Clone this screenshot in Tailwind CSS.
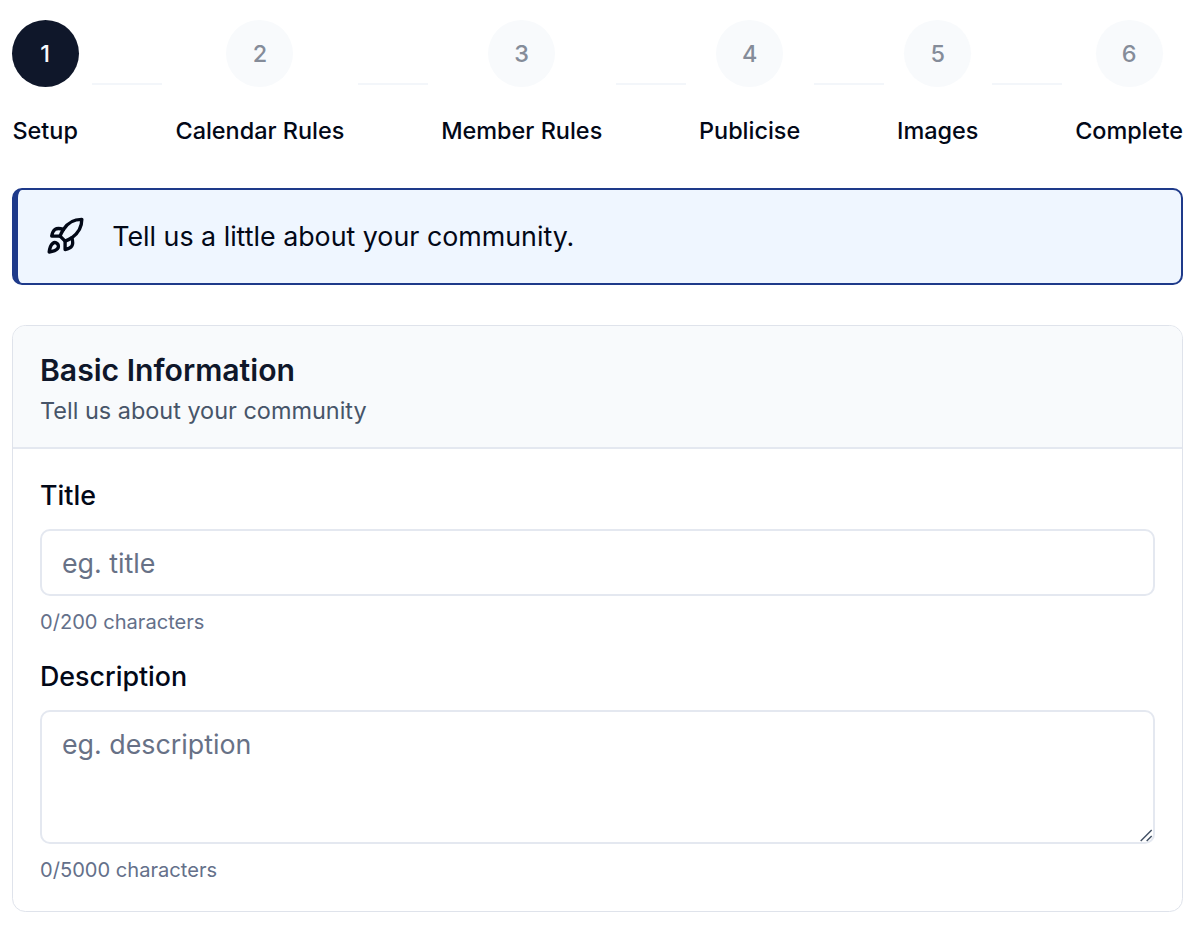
<!DOCTYPE html>
<html lang="en">
<head>
<meta charset="utf-8">
<title>Community setup</title>
<script src="https://cdn.jsdelivr.net/npm/@tailwindcss/browser@4"></script>
</head>
<body class="bg-white font-['Inter',sans-serif] text-[#020817] antialiased">
<main class="pl-[12px] pr-[17px] pt-[20.4px]">
  <nav class="-ml-[0.3px] flex h-[128px] gap-[13.4px] text-[23.45px] font-medium leading-[33.5px]">
    <div class="flex flex-col items-center gap-[26.8px]"><span class="flex size-[67px] shrink-0 items-center justify-center rounded-full bg-[#0f172a] text-[#f8fafc]">1</span><span class="whitespace-nowrap">Setup</span></div>
    <div class="mt-[62.6px] h-[2px] flex-1 bg-[#f3f6fa]"></div>
    <div class="flex flex-col items-center gap-[26.8px]"><span class="flex size-[67px] shrink-0 items-center justify-center rounded-full bg-[#f8fafc] text-[#858c99]">2</span><span class="whitespace-nowrap">Calendar Rules</span></div>
    <div class="mt-[62.6px] h-[2px] flex-1 bg-[#f3f6fa]"></div>
    <div class="flex flex-col items-center gap-[26.8px]"><span class="flex size-[67px] shrink-0 items-center justify-center rounded-full bg-[#f8fafc] text-[#858c99]">3</span><span class="whitespace-nowrap">Member Rules</span></div>
    <div class="mt-[62.6px] h-[2px] flex-1 bg-[#f3f6fa]"></div>
    <div class="flex flex-col items-center gap-[26.8px]"><span class="flex size-[67px] shrink-0 items-center justify-center rounded-full bg-[#f8fafc] text-[#858c99]">4</span><span class="whitespace-nowrap">Publicise</span></div>
    <div class="mt-[62.6px] h-[2px] flex-1 bg-[#f3f6fa]"></div>
    <div class="flex flex-col items-center gap-[26.8px]"><span class="flex size-[67px] shrink-0 items-center justify-center rounded-full bg-[#f8fafc] text-[#858c99]">5</span><span class="whitespace-nowrap">Images</span></div>
    <div class="mt-[62.6px] h-[2px] flex-1 bg-[#f3f6fa]"></div>
    <div class="flex flex-col items-center gap-[26.8px]"><span class="flex size-[67px] shrink-0 items-center justify-center rounded-full bg-[#f8fafc] text-[#858c99]">6</span><span class="whitespace-nowrap">Complete</span></div>
  </nav>

  <div class="mt-[39.6px] flex h-[97px] items-center rounded-[10px] border-2 border-l-[6px] border-[#1e3a8a] bg-[#eff6ff] pl-[27px]">
    <svg class="size-[40.2px]" viewBox="0 0 24 24" fill="none" stroke="currentColor" stroke-width="2" stroke-linecap="round" stroke-linejoin="round"><path d="M4.5 16.5c-1.5 1.26-2 5-2 5s3.74-.5 5-2c.71-.84.7-2.13-.09-2.91a2.18 2.18 0 0 0-2.91-.09z"/><path d="m12 15-3-3a22 22 0 0 1 2-3.95A12.88 12.88 0 0 1 22 2c0 2.72-.78 7.5-6 11a22.35 22.35 0 0 1-4 2z"/><path d="M9 12H4s.55-3.03 2-4c1.62-1.08 5 0 5 0"/><path d="M12 15v5s3.03-.55 4-2c1.08-1.62 0-5 0-5"/></svg>
    <p class="mb-px ml-[27px] text-[26.8px] leading-[40px]">Tell us a little about your community.</p>
  </div>

  <section class="mt-[40px] h-[587px] overflow-hidden rounded-[13.4px] border border-[#dfe3eb]">
    <header class="h-[123px] border-b-2 border-[#e4e8f0] bg-[#f8fafc] px-[27px] pt-[23px]">
      <h2 class="text-[30.15px] font-semibold leading-[42px] text-[#0f172a]">Basic Information</h2>
      <p class="text-[23.45px] leading-[39px] text-[#475569]">Tell us about your community</p>
    </header>
    <div class="px-[27px] pt-[26.5px]">
      <label for="title" class="block text-[26.8px] font-medium leading-[40px]">Title</label>
      <input id="title" placeholder="eg. title" class="mt-[13.5px] block h-[67px] w-full rounded-[10px] border-2 border-[#e4e8f0] px-[20px] pt-[2px] text-[26.8px] placeholder:text-[#677186]">
      <p class="mt-[13.4px] text-[20.1px] leading-[26.8px] text-[#64708a]">0/200 characters</p>
      <label for="description" class="mt-[20px] block text-[26.8px] font-medium leading-[40px]">Description</label>
      <div class="relative mt-[13.8px]">
        <textarea id="description" placeholder="eg. description" class="block h-[134px] w-full resize-none rounded-[10px] border-2 border-[#e4e8f0] px-[20px] py-[12.5px] text-[26.8px] leading-[40px] placeholder:text-[#677186]"></textarea>
        <svg class="absolute bottom-[2px] right-[2px] size-[13px]" viewBox="0 0 13 13" fill="none" stroke="#475569" stroke-width="1.5"><path d="M.7 12 11.7 1M6.7 12l5-5"/></svg>
      </div>
      <p class="mt-[13px] text-[20.1px] leading-[26.8px] text-[#64708a]">0/5000 characters</p>
    </div>
  </section>
</main>
</body>
</html>
